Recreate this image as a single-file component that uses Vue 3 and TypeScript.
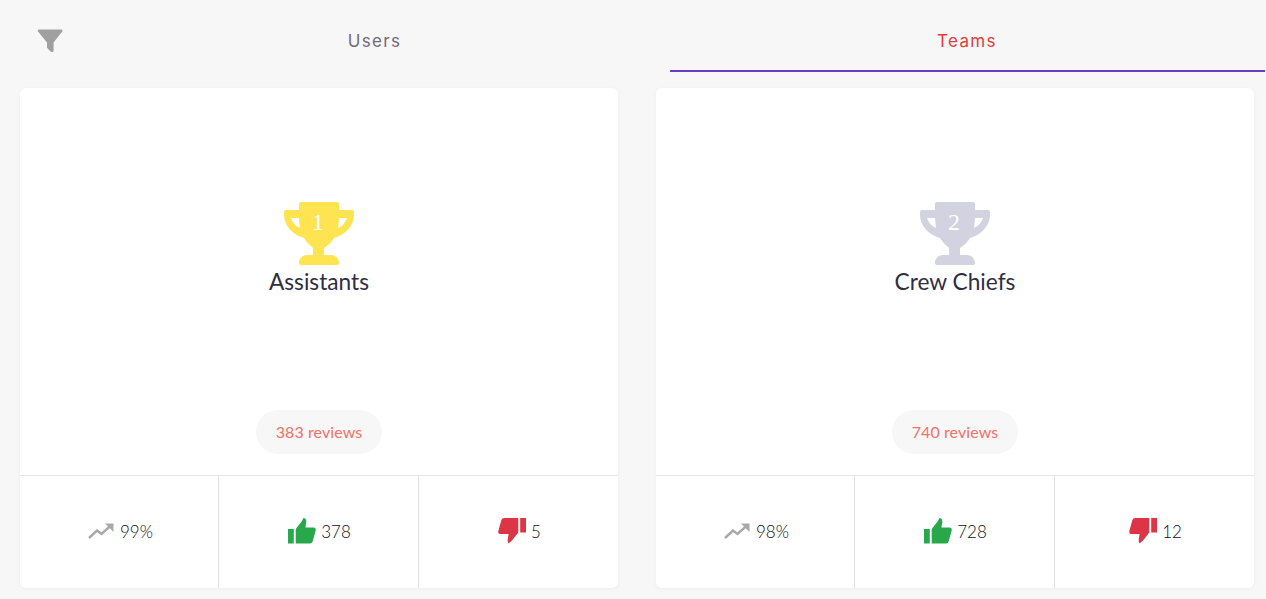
<template>
  <div class="page">
    <div class="tabs">
      <div class="filter">
        <svg width="26" height="24" viewBox="0 0 26 24">
          <path d="M0.6 2 Q0.6 0.6 2.200 0.6 L24 0.6 Q25.6 0.6 25.6 2 L16.6 13.6 L16.6 21.6 Q16.6 23 15.4 23.2 Q13.6 22.8 11.6 20.4 L10 18.6 L10 13.6 Z" fill="#a0a0a0" />
        </svg>
      </div>
      <div class="tab">Users</div>
      <div class="tab active">Teams</div>
    </div>

    <div class="cards">
      <div class="card" v-for="team in teams" :key="team.name">
        <div class="body">
          <div class="trophy" :style="{ color: team.color }">
            <svg width="70" height="63" viewBox="0 0 70 63">
              <path fill="currentColor" fill-rule="evenodd" d="M17 0 H53 Q55 0 55 2 V8 H68 Q70 8 70 10 V13 C70 24 61 33 50 36 C47 41 43 44 40 46 V53 H47 C52 53 55 57 55 61 Q55 63 53 63 H17 Q15 63 15 61 C15 57 18 53 23 53 H29 V46 C27 44 23 41 20 36 C9 33 0 24 0 13 V10 Q0 8 2 8 H15 V2 Q15 0 17 0 Z M7 16 C8.500 20.500 11 23.500 16 26 C15.600 23 15.300 20 15 16 Z M63 16 H55 C54.700 20 54.400 23 54 26 C59 23.500 61.500 20.500 63 16 Z" />
            </svg>
            <span class="rank">{{ team.rank }}</span>
          </div>
          <div class="name">{{ team.name }}</div>
        </div>
        <div class="reviews-wrap">
          <span class="reviews">{{ team.reviews }} reviews</span>
        </div>
        <div class="stats">
          <div class="stat">
            <svg width="26" height="16" viewBox="0 0 26 16">
              <path d="M1 15 L9 7.500 L13.500 11 L23 2.500" fill="none" stroke="#a8a8a8" stroke-width="2.400" />
              <path d="M17 0.500 H25.500 V9 Z" fill="#a8a8a8" />
            </svg>
            <span>{{ team.rate }}%</span>
          </div>
          <div class="stat tight">
            <svg width="28" height="26" viewBox="0 0 29 26" preserveAspectRatio="none">
              <path fill="#28a84a" d="M0 11 H6 V25.500 H0 Z M8 11 L14.500 3 L16 0 Q19 0 19 4 L18 9.500 H27 Q29 9.500 28.800 12 L25.500 23.500 Q25 25.500 22.500 25.500 H8 Z" />
            </svg>
            <span>{{ team.up }}</span>
          </div>
          <div class="stat tight">
            <svg width="28" height="26" viewBox="0 0 29 26" preserveAspectRatio="none">
              <path fill="#dc3545" d="M29 14.500 H23 V0 H29 Z M21 14.500 L14.500 22.500 L11 25.500 Q10 25 10 21.500 L11 16 H2 Q0 16 0.200 13.500 L3.500 2 Q4 0 6.500 0 H21 Z" />
            </svg>
            <span>{{ team.down }}</span>
          </div>
        </div>
      </div>
    </div>
  </div>
</template>

<script setup lang="ts">
interface Team {
  name: string
  rank: number
  color: string
  reviews: number
  rate: number
  up: number
  down: number
}

const teams: Team[] = [
  { name: 'Assistants', rank: 1, color: '#fee451', reviews: 383, rate: 99, up: 378, down: 5 },
  { name: 'Crew Chiefs', rank: 2, color: '#d3d2e0', reviews: 740, rate: 98, up: 728, down: 12 }
]
</script>

<style scoped>
.page {
  width: 1266px;
  height: 599px;
  overflow: hidden;
  background: #f7f7f7;
  font-family: Lato, sans-serif;
  color: #2f2e41;
}

.tabs {
  display: flex;
  height: 72px;
  margin-bottom: 16px;
}

.filter {
  width: 79px;
  padding: 29px 0 0 37px;
  box-sizing: border-box;
}

.tab {
  width: 591px;
  height: 72px;
  box-sizing: border-box;
  text-align: center;
  line-height: 83px;
  font-family: Inter, sans-serif;
  font-size: 17px;
  letter-spacing: 1.35px;
  color: #6e6d7a;
}

.tab.active {
  width: 595px;
  padding-right: 1px;
  color: #e03c3c;
  border-bottom: 2px solid #6a3dc0;
}

.cards {
  display: grid;
  grid-template-columns: 598px 598px;
  gap: 38px;
  padding-left: 20px;
}

.card {
  height: 500px;
  background: #fff;
  border-radius: 6px;
  box-shadow: 0 1px 4px rgba(0, 0, 0, 0.04);
  display: flex;
  flex-direction: column;
}

.body {
  height: 322px;
  padding-top: 114px;
  box-sizing: border-box;
  display: flex;
  flex-direction: column;
  align-items: center;
}

.trophy {
  position: relative;
  height: 63px;
}

.rank {
  position: absolute;
  left: 0;
  right: 2px;
  top: 6px;
  text-align: center;
  font-family: "Liberation Serif", serif;
  font-size: 24px;
  line-height: 28px;
  color: #fff;
}

.name {
  font-size: 22.7px;
  line-height: 33px;
}

.reviews-wrap {
  height: 65px;
  display: flex;
  justify-content: center;
  border-bottom: 1px solid #e6e6e6;
}

.reviews {
  height: 44px;
  line-height: 44px;
  padding: 0 20px;
  border-radius: 22px;
  background: #f7f7f7;
  font-size: 16px;
  letter-spacing: 0.1px;
  color: #f0706a;
}

.stats {
  flex: 1;
  display: grid;
  grid-template-columns: 198px 200px 200px;
}

.stat {
  display: flex;
  align-items: center;
  justify-content: center;
  gap: 6px;
  padding: 0 0 2px 3px;
  font-size: 17px;
  font-weight: 300;
  color: #0f0e20;
  border-left: 1px solid #dedede;
}

.stat.tight {
  gap: 5px;
  padding-left: 2px;
}

.stat:first-child {
  border-left: none;
}
</style>
